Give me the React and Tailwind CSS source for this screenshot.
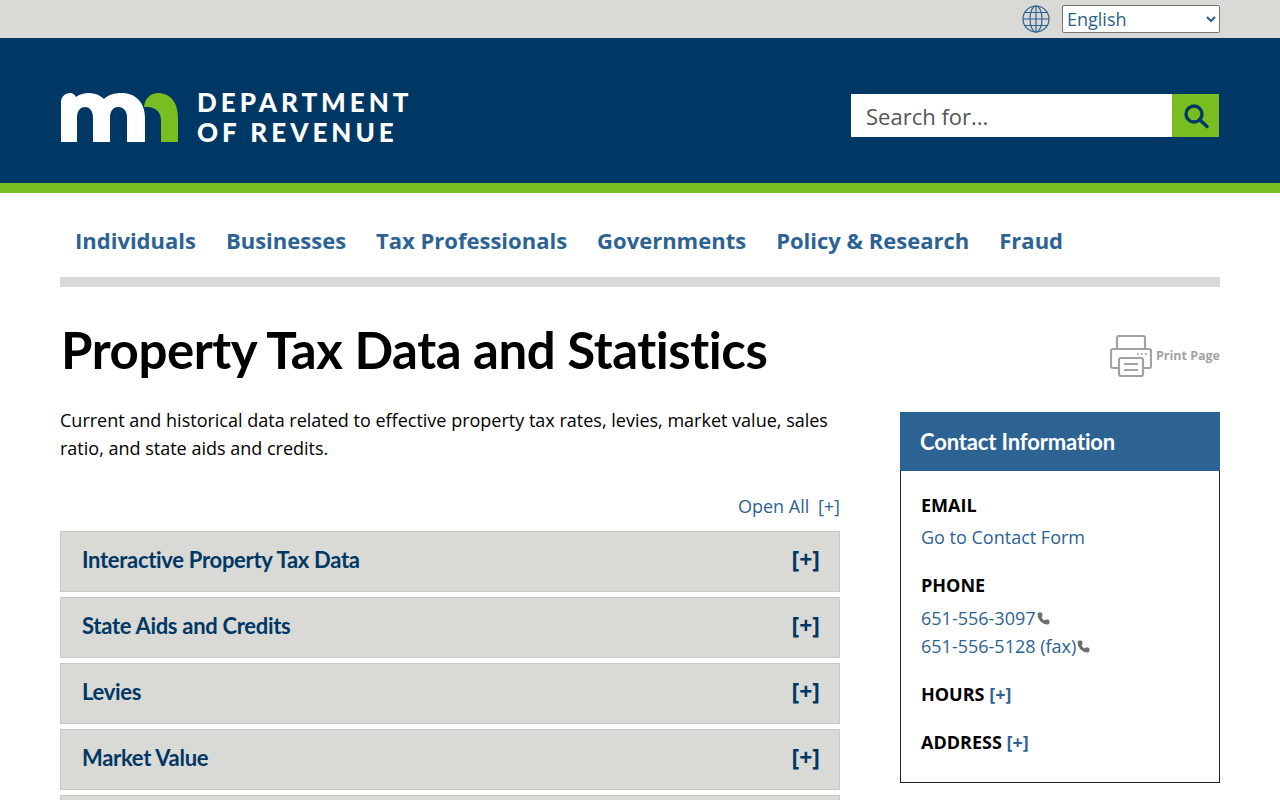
import { Phone } from 'lucide-react';

const navItems = ['Individuals', 'Businesses', 'Tax Professionals', 'Governments', 'Policy & Research', 'Fraud'];
const sections = ['Interactive Property Tax Data', 'State Aids and Credits', 'Levies', 'Market Value'];

function MnLogo() {
  return (
    <svg width="119" height="50" viewBox="0 0 119 50" className="shrink-0">
      <path
        fill="#fff"
        d="M1 50V10C1 5 5 1 10 1C13 1 15 3 16 5C20 2 24 1 29 1C35 1 40 3 44 7C48 3 54 1 62 1C75 1 85 10 85 26V50H67V26C67 19 64 15 58 15C53 15 50 19 50 26V50H33V26C33 19 30 15 25 15C20 15 17 19 17 26V50Z"
      />
      <path
        fill="#78be21"
        d="M84 15C85 6 91 1 98 1C110 1 118 10 118 26V50H101V28C101 20 95 15 88 15Z"
      />
    </svg>
  );
}

function GlobeIcon() {
  return (
    <svg width="28" height="28" viewBox="0 0 28 28" fill="none" stroke="#2d6393" strokeWidth="1.2">
      <circle cx="14" cy="14" r="13" />
      <ellipse cx="14" cy="14" rx="6" ry="13" />
      <path d="M14 1v26M1 14h26M3 7.5h22M3 20.5h22" />
    </svg>
  );
}

function SearchIcon() {
  return (
    <svg width="26" height="26" viewBox="0 0 26 26" fill="none" stroke="#003865" strokeWidth="3.4" strokeLinecap="round">
      <circle cx="11" cy="11" r="8" />
      <path d="M17 17l7 6.5" />
    </svg>
  );
}

function PrinterIcon() {
  return (
    <svg width="42" height="42" viewBox="0 0 42 42" fill="none" stroke="#a2a2a2" strokeWidth="2.2" strokeLinejoin="round">
      <path d="M7 14V3a2 2 0 0 1 2-2h24a2 2 0 0 1 2 2v11" />
      <path d="M9 33H3a2 2 0 0 1-2-2V16a2 2 0 0 1 2-2h36a2 2 0 0 1 2 2v15a2 2 0 0 1-2 2h-6" />
      <rect x="9" y="23" width="24" height="18" rx="2" />
      <path d="M14 29h14M14 35h14" />
      <path d="M27 19h1.500M31 19h1.500M35 19h1.500" />
    </svg>
  );
}

function ContactPhone() {
  return <Phone size={13} fill="#6b6b6b" stroke="#6b6b6b" className="ml-[1px] mt-[1px] scale-x-[-1] rotate-[90deg]" />;
}

export default function App() {
  return (
    <div className="h-[800px] overflow-hidden bg-white text-black font-['Open_Sans',sans-serif]">
      {/* Language bar */}
      <div className="flex h-[38px] items-center justify-end bg-[#d9d9d6] pr-[60px]">
        <GlobeIcon />
        <select className="ml-[12px] h-[28px] w-[158px] rounded-[2px] border border-[#767676] bg-white text-[18px] text-[#2d5f8b]">
          <option>English</option>
        </select>
      </div>

      {/* Header */}
      <header className="flex h-[155px] items-start justify-between border-b-[10px] border-[#78be21] bg-[#003865] px-[60px]">
        <div className="mt-[49px] flex items-center">
          <MnLogo />
          <div className="ml-[18px] font-['Lato',sans-serif] text-[26px] font-black leading-[30px] tracking-[4px] text-white">
            <div>DEPARTMENT</div>
            <div>OF REVENUE</div>
          </div>
        </div>
        <div className="mt-[55px] flex h-[45px] w-[370px] border border-[#003865]">
          <div className="flex flex-1 items-center bg-white pl-[15px] pt-[1px] text-[22px] text-[#555]">Search for...</div>
          <div className="flex w-[47px] items-center justify-center bg-[#78be21]">
            <SearchIcon />
          </div>
        </div>
      </header>

      <div className="px-[60px]">
        {/* Main nav */}
        <nav className="flex h-[94px] items-center gap-[30px] border-b-[10px] border-[#d9d9d6] pl-[15px] pt-[10px] text-[22px] font-bold text-[#2d6393]">
          {navItems.map((item) => (
            <a key={item}>{item}</a>
          ))}
        </nav>

        {/* Title */}
        <div className="mt-[31px] flex h-[64px] items-center justify-between">
          <h1 className="ml-[1px] font-['Lato',sans-serif] text-[51px] font-bold leading-[64px] tracking-[-0.45px]">
            Property Tax Data and Statistics
          </h1>
          <div className="mt-[12px] flex items-center gap-[4px] text-[12.5px] font-bold text-[#a2a2a2]">
            <PrinterIcon />
            <span>Print Page</span>
          </div>
        </div>

        <div className="mt-[30px] flex justify-between">
          {/* Left column */}
          <main className="w-[780px]">
            <p className="-mt-[6px] text-[18px] leading-[28px]">
              Current and historical data related to effective property tax rates, levies, market value, sales ratio, and state aids and credits.
            </p>
            <div className="mt-[30px] text-right text-[18px] leading-[28px] text-[#2d6393]">
              Open All <span className="ml-[4px]">[+]</span>
            </div>
            <div className="mt-[11px] flex flex-col gap-[5px]">
              {sections.map((title) => (
                <div
                  key={title}
                  className="flex h-[61px] shrink-0 items-center justify-between border border-[#c8c8c5] bg-[#d9d9d6] pb-[4px] pl-[21px] pr-[19px] font-['Lato',sans-serif] text-[22px] font-bold tracking-[-0.3px] text-[#003865]"
                >
                  <span>{title}</span>
                  <span className="font-['Open_Sans',sans-serif] text-[23px] tracking-normal">[+]</span>
                </div>
              ))}
              <div className="h-[61px] shrink-0 border border-[#c8c8c5] bg-[#d9d9d6]" />
            </div>
          </main>

          {/* Contact sidebar */}
          <aside className="h-[371px] w-[320px] border border-[#222]">
            <div className="-mx-px -mt-px flex h-[59px] items-center bg-[#2d6393] pl-[20px] font-['Lato',sans-serif] text-[22px] font-bold tracking-[-0.15px] text-white">
              Contact Information
            </div>
            <div className="pl-[20px] pt-[20px] text-[18px] leading-[28px]">
              <div className="font-bold">EMAIL</div>
              <div className="mt-[4px] text-[#2d6393]">Go to Contact Form</div>
              <div className="mt-[20px] font-bold">PHONE</div>
              <div className="mt-[5px] flex items-center text-[#2d6393]">
                651-556-3097
                <ContactPhone />
              </div>
              <div className="flex items-center text-[#2d6393]">
                651-556-5128 (fax)
                <ContactPhone />
              </div>
              <div className="mt-[20px] font-bold">
                HOURS <span className="text-[18px] text-[#2d6393]">[+]</span>
              </div>
              <div className="mt-[20px] font-bold">
                ADDRESS <span className="text-[18px] text-[#2d6393]">[+]</span>
              </div>
            </div>
          </aside>
        </div>
      </div>
    </div>
  );
}
